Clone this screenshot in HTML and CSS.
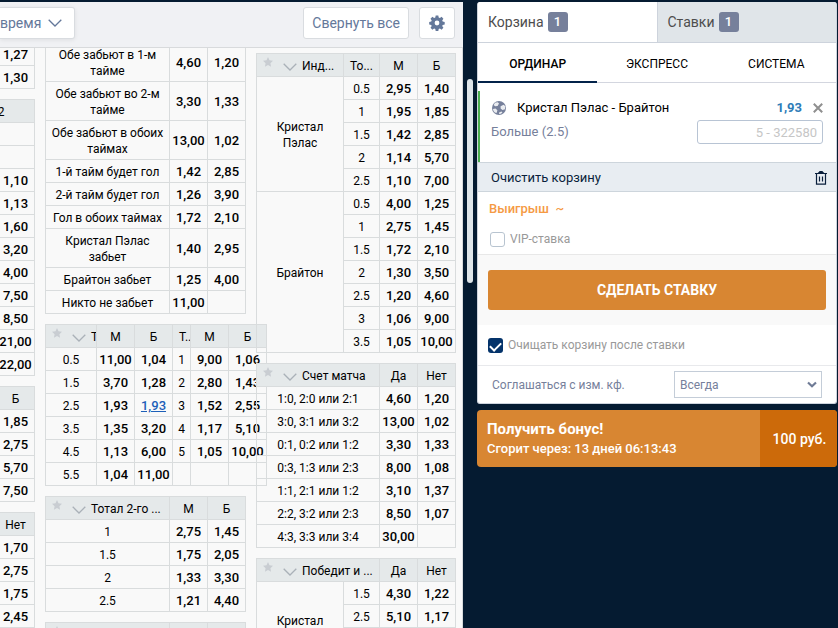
FILE: index.html
```
<!DOCTYPE html>
<html lang="ru">
<head>
  <meta charset="UTF-8">
  <title>Кристал Пэлас - Брайтон</title>
  <link rel="stylesheet" href="styles.css">
</head>
<body>
  <!-- Shared icons -->
  <svg class="sprite" aria-hidden="true">
    <symbol id="star" viewBox="0 0 24 24"><path d="M12 0l3.600 8 8.400 1-6.200 5.800 1.600 8.500-7.400-4.200-7.400 4.200 1.600-8.500L0 9l8.400-1z"/></symbol>
    <symbol id="chevron" viewBox="0 0 14 8"><path d="M.7.800L7 7 13.300.800" fill="none" stroke="currentColor" stroke-width="1.300"/></symbol>
  </svg>

  <div class="page">
    <main class="event">
      <div class="toolbar">
        <button class="tool-button period">время <svg class="arrow"><use href="#chevron"/></svg></button>
        <button class="tool-button collapse">Свернуть все</button>
        <button class="tool-button settings" aria-label="Настройки">
          <svg width="16" height="16" viewBox="0 0 16 16"><path fill-rule="evenodd" d="M6.700.500h2.600l.4 2 1.200.5 1.700-1.200 1.800 1.900-1.200 1.700.5 1.200 2 .4v2.500l-2 .4-.5 1.200 1.200 1.700-1.800 1.900-1.700-1.200-1.200.5-.4 2H6.700l-.4-2-1.200-.5-1.700 1.200-1.900-1.900 1.200-1.700-.5-1.200-2-.4V7l2-.4.5-1.200-1.200-1.700 1.900-1.900L5.100 3l1.200-.5zM8 5.600a2.400 2.400 0 100 4.800 2.400 2.400 0 000-4.800z"/></svg>
        </button>
      </div>

      <div class="markets">
        <div class="market-col">
          <table class="market">
            <tr><td></td><td class="odd">1,27</td></tr>
            <tr><td></td><td class="odd">1,30</td></tr>
          </table>
          <table class="market">
            <tr><th colspan="2">Ф2</th></tr>
            <tr><td colspan="2"></td></tr>
            <tr><td colspan="2"></td></tr>
            <tr><td></td><td class="odd">1,10</td></tr>
            <tr><td></td><td class="odd">1,13</td></tr>
            <tr><td></td><td class="odd">1,60</td></tr>
            <tr><td></td><td class="odd">3,20</td></tr>
            <tr><td></td><td class="odd">4,00</td></tr>
            <tr><td></td><td class="odd">7,50</td></tr>
            <tr><td></td><td class="odd">8,50</td></tr>
            <tr><td></td><td class="odd">21,00</td></tr>
            <tr><td></td><td class="odd">22,00</td></tr>
          </table>
          <table class="market">
            <tr><th></th><th>Б</th></tr>
            <tr><td></td><td class="odd">1,85</td></tr>
            <tr><td></td><td class="odd">2,75</td></tr>
            <tr><td></td><td class="odd">5,70</td></tr>
            <tr><td></td><td class="odd">7,50</td></tr>
          </table>
          <table class="market">
            <tr><th></th><th>Нет</th></tr>
            <tr><td></td><td class="odd">1,70</td></tr>
            <tr><td></td><td class="odd">2,75</td></tr>
            <tr><td></td><td class="odd">1,75</td></tr>
            <tr><td></td><td class="odd">2,45</td></tr>
          </table>
        </div>

        <div class="market-col">
          <table class="market">
            <colgroup><col class="c-name"><col class="c-odd"><col class="c-odd"></colgroup>
            <tr><td>Обе забьют в 1-м тайме</td><td class="odd">4,60</td><td class="odd">1,20</td></tr>
            <tr><td>Обе забьют во 2-м тайме</td><td class="odd">3,30</td><td class="odd">1,33</td></tr>
            <tr><td>Обе забьют в обоих таймах</td><td class="odd">13,00</td><td class="odd">1,02</td></tr>
            <tr><td>1-й тайм будет гол</td><td class="odd">1,42</td><td class="odd">2,85</td></tr>
            <tr><td>2-й тайм будет гол</td><td class="odd">1,26</td><td class="odd">3,90</td></tr>
            <tr><td>Гол в обоих таймах</td><td class="odd">1,72</td><td class="odd">2,10</td></tr>
            <tr><td>Кристал Пэлас<br>забьет</td><td class="odd">1,40</td><td class="odd">2,95</td></tr>
            <tr><td>Брайтон забьет</td><td class="odd">1,25</td><td class="odd">4,00</td></tr>
            <tr><td>Никто не забьет</td><td class="odd">11,00</td><td></td></tr>
          </table>

          <table class="market wide">
            <colgroup><col class="c-total"><col class="c-odd"><col class="c-odd"><col class="c-mini"><col class="c-odd"><col class="c-odd"></colgroup>
            <tr>
              <th class="title"><div><svg class="star"><use href="#star"/></svg><svg class="arrow"><use href="#chevron"/></svg><span>Т</span></div></th>
              <th>М</th><th>Б</th><th class="cut">Т...</th><th>М</th><th>Б</th>
            </tr>
            <tr><td>0.5</td><td class="odd">11,00</td><td class="odd">1,04</td><td>1</td><td class="odd">9,00</td><td class="odd">1,06</td></tr>
            <tr><td>1.5</td><td class="odd">3,70</td><td class="odd">1,28</td><td>2</td><td class="odd">2,80</td><td class="odd">1,43</td></tr>
            <tr><td>2.5</td><td class="odd">1,93</td><td class="odd"><a href="#basket">1,93</a></td><td>3</td><td class="odd">1,52</td><td class="odd">2,55</td></tr>
            <tr><td>3.5</td><td class="odd">1,35</td><td class="odd">3,20</td><td>4</td><td class="odd">1,17</td><td class="odd">5,10</td></tr>
            <tr><td>4.5</td><td class="odd">1,13</td><td class="odd">6,00</td><td>5</td><td class="odd">1,05</td><td class="odd">10,00</td></tr>
            <tr><td>5.5</td><td class="odd">1,04</td><td class="odd">11,00</td><td></td><td></td><td></td></tr>
          </table>

          <table class="market">
            <colgroup><col class="c-name"><col class="c-odd"><col class="c-odd"></colgroup>
            <tr>
              <th class="title"><div><svg class="star"><use href="#star"/></svg><svg class="arrow"><use href="#chevron"/></svg><span>Тотал 2-го ...</span></div></th>
              <th>М</th><th>Б</th>
            </tr>
            <tr><td>1</td><td class="odd">2,75</td><td class="odd">1,45</td></tr>
            <tr><td>1.5</td><td class="odd">1,75</td><td class="odd">2,05</td></tr>
            <tr><td>2</td><td class="odd">1,33</td><td class="odd">3,30</td></tr>
            <tr><td>2.5</td><td class="odd">1,21</td><td class="odd">4,40</td></tr>
          </table>

          <table class="market">
            <colgroup><col class="c-name"><col class="c-odd"><col class="c-odd"></colgroup>
            <tr>
              <th class="title"><div><svg class="star"><use href="#star"/></svg></div></th>
              <th></th><th></th>
            </tr>
          </table>
        </div>

        <div class="market-col">
          <table class="market">
            <colgroup><col><col class="c-line"><col class="c-odd"><col class="c-odd"></colgroup>
            <tr>
              <th class="title"><div><svg class="star"><use href="#star"/></svg><svg class="arrow"><use href="#chevron"/></svg><span>Инд...</span></div></th>
              <th>То...</th><th>М</th><th>Б</th>
            </tr>
            <tr><td rowspan="5" class="team">Кристал Пэлас</td><td>0.5</td><td class="odd">2,95</td><td class="odd">1,40</td></tr>
            <tr><td>1</td><td class="odd">1,95</td><td class="odd">1,85</td></tr>
            <tr><td>1.5</td><td class="odd">1,42</td><td class="odd">2,85</td></tr>
            <tr><td>2</td><td class="odd">1,14</td><td class="odd">5,70</td></tr>
            <tr><td>2.5</td><td class="odd">1,10</td><td class="odd">7,00</td></tr>
            <tr><td rowspan="7" class="team">Брайтон</td><td>0.5</td><td class="odd">4,00</td><td class="odd">1,25</td></tr>
            <tr><td>1</td><td class="odd">2,75</td><td class="odd">1,45</td></tr>
            <tr><td>1.5</td><td class="odd">1,72</td><td class="odd">2,10</td></tr>
            <tr><td>2</td><td class="odd">1,30</td><td class="odd">3,50</td></tr>
            <tr><td>2.5</td><td class="odd">1,20</td><td class="odd">4,60</td></tr>
            <tr><td>3</td><td class="odd">1,06</td><td class="odd">9,00</td></tr>
            <tr><td>3.5</td><td class="odd">1,05</td><td class="odd">10,00</td></tr>
          </table>

          <table class="market">
            <colgroup><col><col class="c-odd"><col class="c-odd"></colgroup>
            <tr>
              <th class="title"><div><svg class="star"><use href="#star"/></svg><svg class="arrow"><use href="#chevron"/></svg><span>Счет матча</span></div></th>
              <th>Да</th><th>Нет</th>
            </tr>
            <tr><td>1:0, 2:0 или 2:1</td><td class="odd">4,60</td><td class="odd">1,20</td></tr>
            <tr><td>3:0, 3:1 или 3:2</td><td class="odd">13,00</td><td class="odd">1,02</td></tr>
            <tr><td>0:1, 0:2 или 1:2</td><td class="odd">3,30</td><td class="odd">1,33</td></tr>
            <tr><td>0:3, 1:3 или 2:3</td><td class="odd">8,00</td><td class="odd">1,08</td></tr>
            <tr><td>1:1, 2:1 или 1:2</td><td class="odd">3,10</td><td class="odd">1,37</td></tr>
            <tr><td>2:2, 3:2 или 2:3</td><td class="odd">8,50</td><td class="odd">1,07</td></tr>
            <tr><td>4:3, 3:3 или 3:4</td><td class="odd">30,00</td><td></td></tr>
          </table>

          <table class="market">
            <colgroup><col><col class="c-line"><col class="c-odd"><col class="c-odd"></colgroup>
            <tr>
              <th class="title" colspan="2"><div><svg class="star"><use href="#star"/></svg><svg class="arrow"><use href="#chevron"/></svg><span>Победит и ...</span></div></th>
              <th>Да</th><th>Нет</th>
            </tr>
            <tr><td rowspan="4" class="team">Кристал Пэлас</td><td>1.5</td><td class="odd">4,30</td><td class="odd">1,22</td></tr>
            <tr><td>2.5</td><td class="odd">5,10</td><td class="odd">1,17</td></tr>
            <tr><td></td><td></td><td></td></tr>
            <tr><td></td><td></td><td></td></tr>
          </table>
        </div>
      </div>
    </main>

    <div class="scrollbar"><div class="scrollbar-thumb"></div></div>

    <aside class="sidebar">
      <section class="basket" id="basket">
        <div class="tabs">
          <button class="tab active">Корзина <span class="badge">1</span></button>
          <button class="tab">Ставки <span class="badge">1</span></button>
        </div>
        <div class="types">
          <button class="type active">ОРДИНАР</button>
          <button class="type">ЭКСПРЕСС</button>
          <button class="type">СИСТЕМА</button>
        </div>

        <div class="bet">
          <div class="bet-row">
            <svg class="ball" viewBox="0 0 14 14"><circle cx="7" cy="7" r="7" fill="#76809b"/><path d="M3 1.800l2.700-.6L7 2.600 5.600 4.900l-2.500.3L1.700 4zM8.600 5.300l3-1.500 1.700 1.400-.3 3-2.500.9-1.900-1.500zM1 8l2.500-.6 1.900 1.900-.8 2.700-1.800-.5C1.800 10.600 1.100 9.300 1 8zM7.300 11.200l2.300-.6.8.9-1.500 1.300-1.900.2z" fill="#fff" opacity=".85"/></svg>
            <span class="bet-name">Кристал Пэлас - Брайтон</span>
            <span class="bet-odd">1,93</span>
            <button class="remove" aria-label="Удалить">
              <svg width="10" height="10" viewBox="0 0 10 10"><path d="M.800.800l8.400 8.400M9.200.800L.800 9.200" stroke="#8f8f8f" stroke-width="2"/></svg>
            </button>
          </div>
          <div class="bet-row">
            <label class="bet-pick" for="stake">Больше (2.5)</label>
            <input class="stake" id="stake" type="text" placeholder="5 - 322580">
          </div>
        </div>

        <button class="clear">
          Очистить корзину
          <svg width="12" height="14" viewBox="0 0 12 14"><path d="M0 2.500h12M1.500 2.500v10.700h9V2.500M4.500 5.500v5M7.500 5.500v5" fill="none" stroke="#0a1f3c" stroke-width="1.200"/><path d="M3.500 2.500V1.200L4.700 0h2.600l1.200 1.200v1.300z" fill="#0a1f3c"/></svg>
        </button>

        <div class="summary">
          <div class="win">Выигрыш &nbsp;~</div>
          <label class="check"><input type="checkbox"> VIP-ставка</label>
        </div>
        <div class="submit">
          <button class="submit-button">СДЕЛАТЬ СТАВКУ</button>
        </div>
        <div class="option">
          <label class="check"><input type="checkbox" checked> Очищать корзину после ставки</label>
        </div>
        <div class="agree">
          <label for="agree">Соглашаться с изм. кф.</label>
          <div class="select">
            <select id="agree"><option>Всегда</option></select>
            <svg viewBox="0 0 10 7"><path d="M1 1.500l4 3.800 4-3.800" fill="none" stroke="#6f7b96" stroke-width="2.200"/></svg>
          </div>
        </div>
      </section>

      <section class="bonus">
        <div class="bonus-text">
          <div class="bonus-title">Получить бонус!</div>
          <div>Сгорит через: 13 дней 06:13:43</div>
        </div>
        <button class="bonus-button">100 руб.</button>
      </section>
    </aside>
  </div>
</body>
</html>
```
FILE: styles.css
```
* {
  box-sizing: border-box;
}
body {
  margin: 0;
  background: #051b31;
  font-family: Roboto, sans-serif;
  font-size: 13px;
  line-height: 16px;
  color: #000;
}
button, input, select {
  font: inherit;
  margin: 0;
}
button {
  cursor: pointer;
}
.sprite {
  display: none;
}
.page {
  display: flex;
  height: 100vh;
  padding: 2px 1px 0 0;
  overflow: hidden;
}

/* event */
.event {
  flex: 1;
  min-width: 0;
  display: flex;
  flex-direction: column;
  background: #f9f9f9;
}
.toolbar {
  display: flex;
  align-items: flex-start;
  gap: 10px;
  height: 46px;
  flex-shrink: 0;
  padding: 5px 8px 0 0;
  background: #f0f1f4;
  border-bottom: 1px solid #d8dadc;
}
.tool-button {
  height: 32px;
  border: 1px solid #d9dce0;
  border-radius: 3px;
  background: #fff;
  color: #64789a;
  font-size: 14px;
}
.period {
  display: flex;
  align-items: center;
  gap: 7px;
  padding: 0 12px 0 0;
  border-left: 0;
  border-radius: 0 3px 3px 0;
  box-shadow: 0 1px 4px rgba(0, 0, 0, 0.08);
}
.collapse {
  margin-left: auto;
  padding: 0 8px;
}
.settings {
  width: 36px;
  padding: 0;
  display: flex;
  align-items: center;
  justify-content: center;
  fill: #64789a;
}
.arrow {
  width: 14px;
  height: 8px;
  flex-shrink: 0;
}
.markets {
  flex: 1;
  min-height: 0;
  display: flex;
  justify-content: flex-end;
  gap: 10px;
  padding-right: 6px;
  border-right: 1px solid #d8dadc;
  overflow: hidden;
}
.market-col {
  flex: 0 0 201px;
  min-width: 0;
  margin-top: -6px;
}
.market-col:first-child {
  flex-basis: 77px;
}
.market-col:last-child {
  flex-basis: 200px;
  padding-top: 11px;
}

/* market tables */
.market {
  width: 100%;
  margin-bottom: 10px;
  table-layout: fixed;
  border-collapse: collapse;
  text-align: center;
  font-size: 12px;
}
.market.wide {
  width: 222px;
}
.market th,
.market td {
  height: 23px;
  padding: 4px 0 2px;
  border: 1px solid #d9dcdd;
  font-weight: 400;
}
.market td {
  padding-left: 4px;
  padding-right: 4px;
}
.market th {
  background: #e5e9ea;
}
.market .odd {
  padding-left: 0;
  padding-right: 0;
  font-size: 13px;
  font-weight: 500;
}
.market .team {
  padding-left: 16px;
  padding-right: 16px;
}
.market .cut {
  overflow: hidden;
  text-align: left;
  padding-left: 6px;
}
.market .title {
  padding-top: 3px;
}
.title div {
  display: flex;
  align-items: flex-end;
  height: 17px;
  gap: 5px;
  padding-left: 6px;
  overflow: hidden;
  white-space: nowrap;
}
.title .arrow {
  align-self: center;
  margin-left: 5px;
  margin-top: 2px;
  color: #aab1b8;
}
.star {
  width: 10px;
  height: 10px;
  flex-shrink: 0;
  align-self: flex-start;
  fill: #c9cdd2;
}
.c-name {
  width: 124px;
}
.c-total {
  width: 51px;
}
.c-line {
  width: 36px;
}
.c-odd {
  width: 38px;
}
.c-mini {
  width: 18px;
}
.market a {
  color: #1d5fb8;
}

.scrollbar {
  width: 14px;
  padding: 77px 4px 0;
}
.scrollbar-thumb {
  height: 204px;
  border-radius: 3px;
  background: #dfe6ea;
}

/* sidebar */
.sidebar {
  width: 360px;
  flex-shrink: 0;
}
.basket {
  border: 1px solid #cdd3dc;
  border-top: 0;
  border-radius: 3px;
  background: #fff;
  overflow: hidden;
}
.tabs {
  display: flex;
  height: 41px;
  border-bottom: 1px solid #cdd3dc;
}
.tab {
  flex: 1;
  display: flex;
  align-items: center;
  gap: 4px;
  padding: 0 10px;
  border: 0;
  background: #e0e5e9;
  color: #4d4d4d;
  font-size: 14px;
}
.tab.active {
  background: #fff;
  border-right: 1px solid #cdd3dc;
}
.badge {
  width: 20px;
  height: 20px;
  border-radius: 3px;
  background: #76809b;
  color: #fff;
  font-size: 13px;
  font-weight: 500;
  line-height: 20px;
}
.types {
  display: flex;
  height: 40px;
  border-bottom: 1px solid #d3d6df;
}
.type {
  flex: 1;
  height: 40px;
  padding: 3px 0 0;
  border: 0;
  border-bottom: 2px solid transparent;
  background: none;
  font-size: 12px;
}
.type.active {
  border-bottom-color: #03234a;
  font-weight: 500;
}
.bet {
  margin-top: 8px;
  height: 71px;
  padding: 9px 13px 0 11px;
  border-left: 2px solid #4caf50;
}
.bet-row {
  display: flex;
  align-items: center;
}
.bet-row + .bet-row {
  margin-top: 4px;
}
.ball {
  width: 14px;
  height: 14px;
  margin: 0 11px 0 1px;
}
.bet-name {
  flex: 1;
}
.bet-odd {
  color: #2e7cb8;
  font-weight: 700;
}
.remove {
  display: flex;
  margin-left: 11px;
  padding: 0;
  border: 0;
  background: none;
}
.bet-pick {
  flex: 1;
  color: #76809b;
}
.stake {
  width: 126px;
  height: 24px;
  padding: 0 5px;
  border: 1px solid #b8c4d4;
  border-radius: 3px;
  text-align: right;
}
.stake::placeholder {
  color: #c6c6c6;
}
.clear {
  display: flex;
  align-items: center;
  justify-content: space-between;
  width: 100%;
  height: 30px;
  padding: 1px 9px 0 13px;
  border: 0;
  border-top: 1px solid #cdd5dc;
  border-bottom: 1px solid #cdd5dc;
  background: #e8edf2;
  color: #0a1f3c;
}
.summary {
  padding: 9px 12px 7px 11px;
}
.win {
  margin-bottom: 14px;
  color: #f59a44;
  font-weight: 500;
}
.check {
  display: flex;
  align-items: center;
  gap: 5px;
  color: #999;
  font-size: 12px;
}
.check input {
  appearance: none;
  width: 15px;
  height: 15px;
  border: 1px solid #b8c4d0;
  border-radius: 3px;
}
.summary .check input {
  margin-left: 1px;
}
.check input:checked {
  display: flex;
  align-items: flex-start;
  justify-content: center;
  padding-top: 4px;
  border: 0;
  background: #04336a;
}
.check input:checked::before {
  content: "";
  width: 9px;
  height: 5px;
  border: solid #fff;
  border-width: 0 0 2px 2px;
  transform: rotate(-45deg);
}
.submit {
  padding: 15px 10px;
  border-top: 1px solid #e8e8e8;
  background: #f9f9f9;
}
.submit-button {
  width: 100%;
  height: 40px;
  border: 0;
  border-radius: 3px;
  background: #d88632;
  color: #fff;
  font-size: 14px;
  font-weight: 700;
}
.option {
  padding: 12px 10px;
}
.agree {
  display: flex;
  align-items: center;
  justify-content: space-between;
  height: 38px;
  padding: 0 14px;
  border-top: 1px solid #e8e9ec;
  color: #76809b;
  font-size: 12px;
}
.select {
  position: relative;
}
.select select {
  appearance: none;
  width: 148px;
  height: 27px;
  padding: 0 5px;
  border: 1px solid #c4cdd8;
  border-radius: 0;
  background: #fff;
  color: #76809b;
}
.select svg {
  position: absolute;
  top: 10px;
  right: 5px;
  width: 10px;
  height: 7px;
  pointer-events: none;
}
.bonus {
  display: flex;
  height: 57px;
  margin-top: 6px;
  border-radius: 4px;
  background: #d88632;
  color: #fff;
  overflow: hidden;
}
.bonus-text {
  flex: 1;
  padding: 9px 10px;
  font-weight: 500;
  line-height: 20px;
}
.bonus-title {
  font-size: 15px;
  font-weight: 700;
}
.bonus-button {
  width: 77px;
  padding: 0 0 0 2px;
  border: 0;
  background: #cc6a0a;
  color: #fff;
  font-size: 14px;
  font-weight: 500;
}
```
